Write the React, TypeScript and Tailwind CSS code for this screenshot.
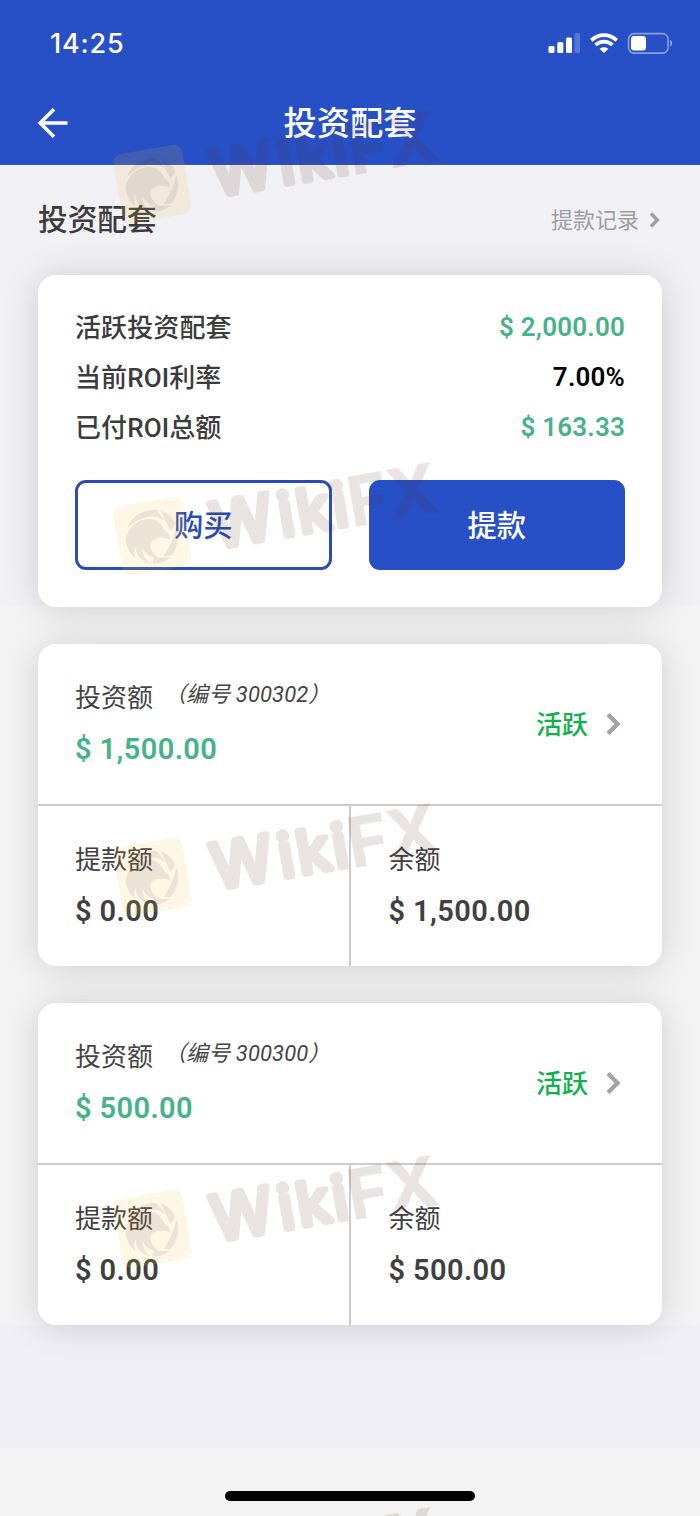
import React from "react";

const watermarkRows = [
  { y: 184, full: true },
  { y: 536, full: true },
  { y: 877, full: true },
  { y: 1229, full: true },
  { y: 1581, full: false },
];

function Watermark() {
  return (
    <svg
      className="pointer-events-none absolute inset-0 z-20"
      width="700"
      height="1516"
      viewBox="0 0 700 1516"
      aria-hidden="true"
    >
      {watermarkRows.map(({ y, full }) => (
        <g key={y} transform={`translate(152.5 ${y})`}>
          {full && (
            <>
              <rect x="-35" y="-35" width="70" height="70" rx="9" fill="#f5bf37" opacity="0.13" transform="rotate(-10)" />
              <g fill="#402048" opacity="0.09">
                <path d="M-25 -8 C-21 -20 -9 -27 4 -26 L13 -15 C4 -22 -10 -22 -25 -8 Z" />
                <path d="M-27 4 C-25 -9 -14 -18 -2 -17 C7 -16 10 -10 12 -5 C17 -3 18 1 17 4 C14 1 9 2 5 2 C-1 4 -4 8 -1 14 C1 18 4 21 8 23 C-1 22 -7 19 -10 12 C-10 19 -7 24 -2 27 C-11 26 -16 20 -17 11 C-19 15 -19 18 -17 22 C-23 17 -26 11 -27 4 Z" />
                <path d="M8 -26 C15 -23 20 -19 23 -12 L18 -5 Z" />
                <path d="M24 -9 C28 2 24 14 18 20 L11 20 C17 12 21 2 24 -9 Z" />
                <path d="M1 22 L18 21.5 C13 26 6 28 0 27 Z" />
              </g>
            </>
          )}
          <g transform="translate(61.6 15.6) rotate(-10)" opacity="0.12" fill="#562818" stroke="#562818" strokeLinejoin="round" fontFamily="Inter, sans-serif">
            {full && (
              <text fontWeight="400" strokeWidth="6.5" y="-3">
                <tspan fontSize="62" x="2">W</tspan>
                <tspan fontSize="59" x="70 88.5 124.5">iki</tspan>
              </text>
            )}
            {full && <text fontSize="69" fontWeight="700" strokeWidth="0.5" x="140">F</text>}
            <text fontSize="69" fontWeight="700" strokeWidth="0.5" x="180">X</text>
          </g>
        </g>
      ))}
    </svg>
  );
}

function StatusBar() {
  return (
    <div className="flex h-[86px] items-center justify-between pr-[27px] pl-[50px]">
      <span className="pt-0.5 font-['Inter'] text-[27px] leading-8 font-medium tracking-[0.8px]">14:25</span>
      <svg width="126" height="24" viewBox="547 31 126 24" fill="white">
        <rect x="548.5" y="46" width="6" height="7" rx="1.5" />
        <rect x="557.3" y="42" width="6" height="11" rx="1.5" />
        <rect x="566" y="37.5" width="6" height="15.5" rx="1.5" />
        <rect x="574.5" y="33" width="5.5" height="20" rx="1.5" opacity="0.22" />
        <path d="M604 53 L599.6 48.8 C602 46.6 606 46.6 608.4 48.8 Z" />
        <path d="M595.6 44.9 C600.2 40.5 607.8 40.5 612.4 44.9" fill="none" stroke="white" strokeWidth="3.6" />
        <path d="M591.3 40.4 C598.4 33.4 609.6 33.4 616.7 40.4" fill="none" stroke="white" strokeWidth="3.8" />
        <rect x="628.6" y="33.6" width="39.5" height="19.5" rx="5.5" fill="none" stroke="white" strokeOpacity="0.45" strokeWidth="1.6" />
        <rect x="631" y="36" width="15" height="14.6" rx="3" />
        <path d="M670.2 39.8 C672.7 41 672.7 45.5 670.2 46.7 Z" opacity="0.5" />
      </svg>
    </div>
  );
}

function Chevron({ small = false }: { small?: boolean }) {
  return small ? (
    <svg width="12" height="18" viewBox="0 0 12 18" fill="none" stroke="#9e9e9e" strokeWidth="3.4">
      <path d="M2 2.5 L8.3 9 L2 15.5" />
    </svg>
  ) : (
    <svg width="16" height="24" viewBox="0 0 16 24" fill="none" stroke="#a3a3a3" strokeWidth="4.4">
      <path d="M2 2.5 L11.5 12 L2 21.5" />
    </svg>
  );
}

function SummaryRow({ label, value, tone }: { label: string; value: string; tone: string }) {
  return (
    <div className="flex h-[50px] items-center justify-between">
      <span className="pt-0.5 text-[26px] font-medium tracking-[0.1px] text-[#3c3c3c]">{label}</span>
      <span className={`text-[26px] font-semibold tracking-[0.2px] ${tone}`}>{value}</span>
    </div>
  );
}

const cardClass =
  "rounded-[18px] bg-white shadow-[0_2px_36px_rgba(0,0,0,0.15)]";

function PackageCard({ id, amount }: { id: string; amount: string }) {
  return (
    <section className={`h-[322px] ${cardClass}`}>
      <div className="flex h-[160px] justify-between pr-10 pl-[37px]">
        <div className="pt-[34px]">
          <div className="flex h-[38px] items-center text-[#444]">
            <span className="pt-0.5 text-[26px]">投资额</span>
            <span className="ml-[22px] pb-[5px] text-[22px] tracking-[0.1px] italic [font-feature-settings:'halt']">
              （编号 {id}）
            </span>
          </div>
          <div className="mt-[14px] text-[29px] leading-[38px] font-semibold tracking-[0.4px] text-[#46b28a]">{amount}</div>
        </div>
        <div className="flex items-center gap-[18px] text-[26px] font-medium text-[#0fb14b]">
          <span className="pt-0.5">活跃</span>
          <Chevron />
        </div>
      </div>
      <div className="grid h-[162px] grid-cols-[313px_1fr] border-t-2 border-[#cccccc] text-[#404040]">
        <div className="border-r-2 border-[#cccccc] pt-[35px] pl-[37px]">
          <div className="text-[26px] leading-[38px]">提款额</div>
          <div className="mt-[13px] text-[29px] leading-[38px] font-semibold tracking-[0.4px]">$ 0.00</div>
        </div>
        <div className="pt-[35px] pl-[37.5px]">
          <div className="text-[26px] leading-[38px]">余额</div>
          <div className="mt-[13px] text-[29px] leading-[38px] font-semibold tracking-[0.4px]">{amount}</div>
        </div>
      </div>
    </section>
  );
}

export default function App() {
  return (
    <div className="relative flex h-[1516px] w-[700px] flex-col overflow-hidden bg-[linear-gradient(#f1f0f5_0_606px,#f3f3f3_606px_1325px,#f0eff5_1325px_1448px,#f3f3f3_1448px)] font-['Roboto','Noto_Sans_CJK_SC',sans-serif]">
      <header className="h-[165px] shrink-0 border-b border-[#3c56a8] bg-[#2850c6] text-white">
        <StatusBar />
        <div className="grid h-[73px] grid-cols-3 items-center">
          <svg className="ml-[37px]" width="32" height="32" viewBox="0 0 32 32" fill="none" stroke="white" strokeWidth="3.6">
            <path d="M30.5 16 H3.5 M17 2.2 L3.2 16 L17 29.8" />
          </svg>
          <h1 className="pt-[3px] text-center text-[33.3px] font-medium">投资配套</h1>
        </div>
      </header>
      <div className="flex h-[110px] shrink-0 items-center justify-between pr-[39px] pl-[38px]">
        <h2 className="pt-px text-[29.7px] font-medium text-[#3c3c3c]">投资配套</h2>
        <div className="flex items-center gap-[10px] text-[22px] text-[#9e9e9e]">
          <span>提款记录</span>
          <Chevron small />
        </div>
      </div>
      <main className="flex flex-col gap-[37px] px-[38px]">
        <section className={`h-[332px] px-[37px] pt-[27px] ${cardClass}`}>
          <SummaryRow label="活跃投资配套" value="$ 2,000.00" tone="text-[#46b28a]" />
          <SummaryRow label="当前ROI利率" value="7.00%" tone="text-black" />
          <SummaryRow label="已付ROI总额" value="$ 163.33" tone="text-[#46b28a]" />
          <div className="mt-[28px] grid grid-cols-2 gap-[37px] text-[29.3px] font-medium">
            <button className="h-[90px] rounded-[11px] border-[3px] border-[#2b4cb4] pt-1 text-[#2b4cb4]">购买</button>
            <button className="h-[90px] rounded-[11px] bg-[#2850c6] pt-1 text-white">提款</button>
          </div>
        </section>
        <PackageCard id="300302" amount="$ 1,500.00" />
        <PackageCard id="300300" amount="$ 500.00" />
      </main>
      <div className="mx-auto mt-auto mb-[15px] h-[10px] w-[250px] shrink-0 rounded-full bg-black" />
      <Watermark />
    </div>
  );
}
